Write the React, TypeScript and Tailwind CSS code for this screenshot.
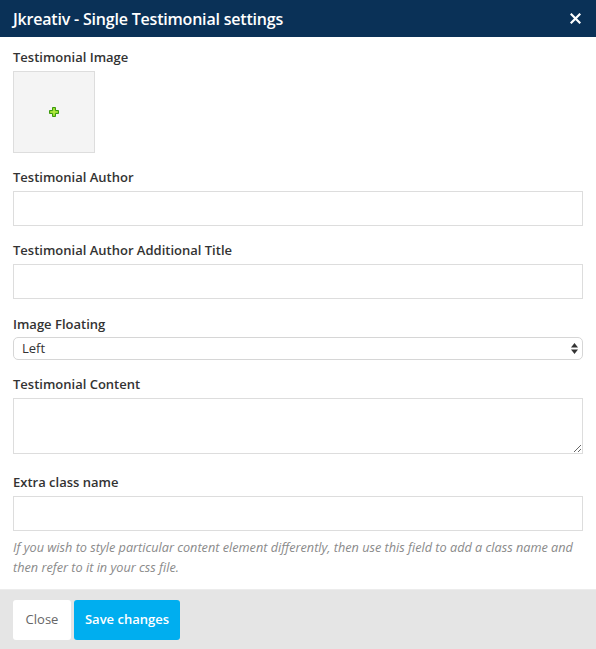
import React, { useState } from 'react';

const Label: React.FC<{ children: React.ReactNode }> = ({ children }) => (
  <label className="block text-[13px] font-semibold leading-[18px] text-[#333]">{children}</label>
);

const PlusIcon: React.FC = () => (
  <svg width="10" height="10" viewBox="0 0 10 10">
    <path
      d="M3.5 0.5h3v3h3v3h-3v3h-3v-3h-3v-3h3z"
      fill="#7ed321"
      stroke="#3c9a0e"
      strokeWidth="1"
    />
    <path d="M4.5 1.5h1v3h3v1h-3v3h-1v-3h-3v-1h3z" fill="#c8f04a" />
  </svg>
);

const App: React.FC = () => {
  const [floating, setFloating] = useState('Left');

  return (
    <div
      className="w-[596px] h-[649px] bg-white flex flex-col overflow-hidden"
      style={{ fontFamily: '"Open Sans", "Liberation Sans", sans-serif' }}
    >
      {/* Header */}
      <div className="h-[37px] shrink-0 bg-[#0a3157] flex items-center justify-between pl-[13px] pr-[15px]">
        <h1 className="text-[16px] font-semibold text-white leading-none font-stretch-[88%] tracking-[-0.2px]">
          Jkreativ - Single Testimonial settings
        </h1>
        <button className="text-white" aria-label="Close">
          <svg width="11" height="11" viewBox="0 0 11 11">
            <path d="M1.5 1.5l8 8M9.5 1.5l-8 8" stroke="#fff" strokeWidth="2.2" strokeLinecap="square" />
          </svg>
        </button>
      </div>

      {/* Body */}
      <div className="flex-1 min-h-0 px-[13px] pt-[11px]">
        <Label>Testimonial Image</Label>
        <div className="mt-[5px] w-[82px] h-[82px] bg-[#f4f4f4] border border-[#dddddd] flex items-center justify-center">
          <PlusIcon />
        </div>

        <div className="mt-[15px]">
          <Label>Testimonial Author</Label>
          <input className="mt-[5px] block w-full h-[35px] border border-[#dddddd] outline-none px-2 text-[13px]" />
        </div>

        <div className="mt-[15px]">
          <Label>Testimonial Author Additional Title</Label>
          <input className="mt-[5px] block w-full h-[35px] border border-[#dddddd] outline-none px-2 text-[13px]" />
        </div>

        <div className="mt-[16px]">
          <Label>Image Floating</Label>
          <div className="relative mt-[4px]">
            <select
              value={floating}
              onChange={(e) => setFloating(e.target.value)}
              className="appearance-none block w-full h-[23px] rounded-[5px] border border-[#d6d6d6] bg-white pl-[8px] text-[13px] text-[#333] leading-[21px] outline-none"
            >
              <option>Left</option>
              <option>Right</option>
              <option>None</option>
            </select>
            <svg className="absolute right-[5px] top-[6px] pointer-events-none" width="7" height="11" viewBox="0 0 7 11">
              <path d="M3.5 0L7 4.5H0z" fill="#333" />
              <path d="M3.5 11L7 6.5H0z" fill="#333" />
            </svg>
          </div>
        </div>

        <div className="mt-[15px]">
          <Label>Testimonial Content</Label>
          <textarea className="mt-[5px] block w-full h-[56px] border border-[#dddddd] outline-none px-2 text-[13px] resize-y" />
        </div>

        <div className="mt-[19px]">
          <Label>Extra class name</Label>
          <input className="mt-[5px] block w-full h-[35px] border border-[#dddddd] outline-none px-2 text-[13px]" />
          <p className="mt-[6px] text-[12.7px] italic leading-[20px] text-[#8a8a8a]">
            If you wish to style particular content element differently, then use this field to add a class name and
            then refer to it in your css file.
          </p>
        </div>
      </div>

      {/* Footer */}
      <div className="h-[60px] shrink-0 bg-[#e5e5e5] border-t border-[#ececec] flex items-start gap-[3px] px-[13px] pt-[10px]">
        <button className="h-[40px] w-[58px] rounded-[3px] bg-white text-[13px] text-[#666]">Close</button>
        <button className="h-[40px] w-[106px] rounded-[3px] bg-[#00aeef] text-[13px] font-semibold text-white">
          Save changes
        </button>
      </div>
    </div>
  );
};

export default App;
